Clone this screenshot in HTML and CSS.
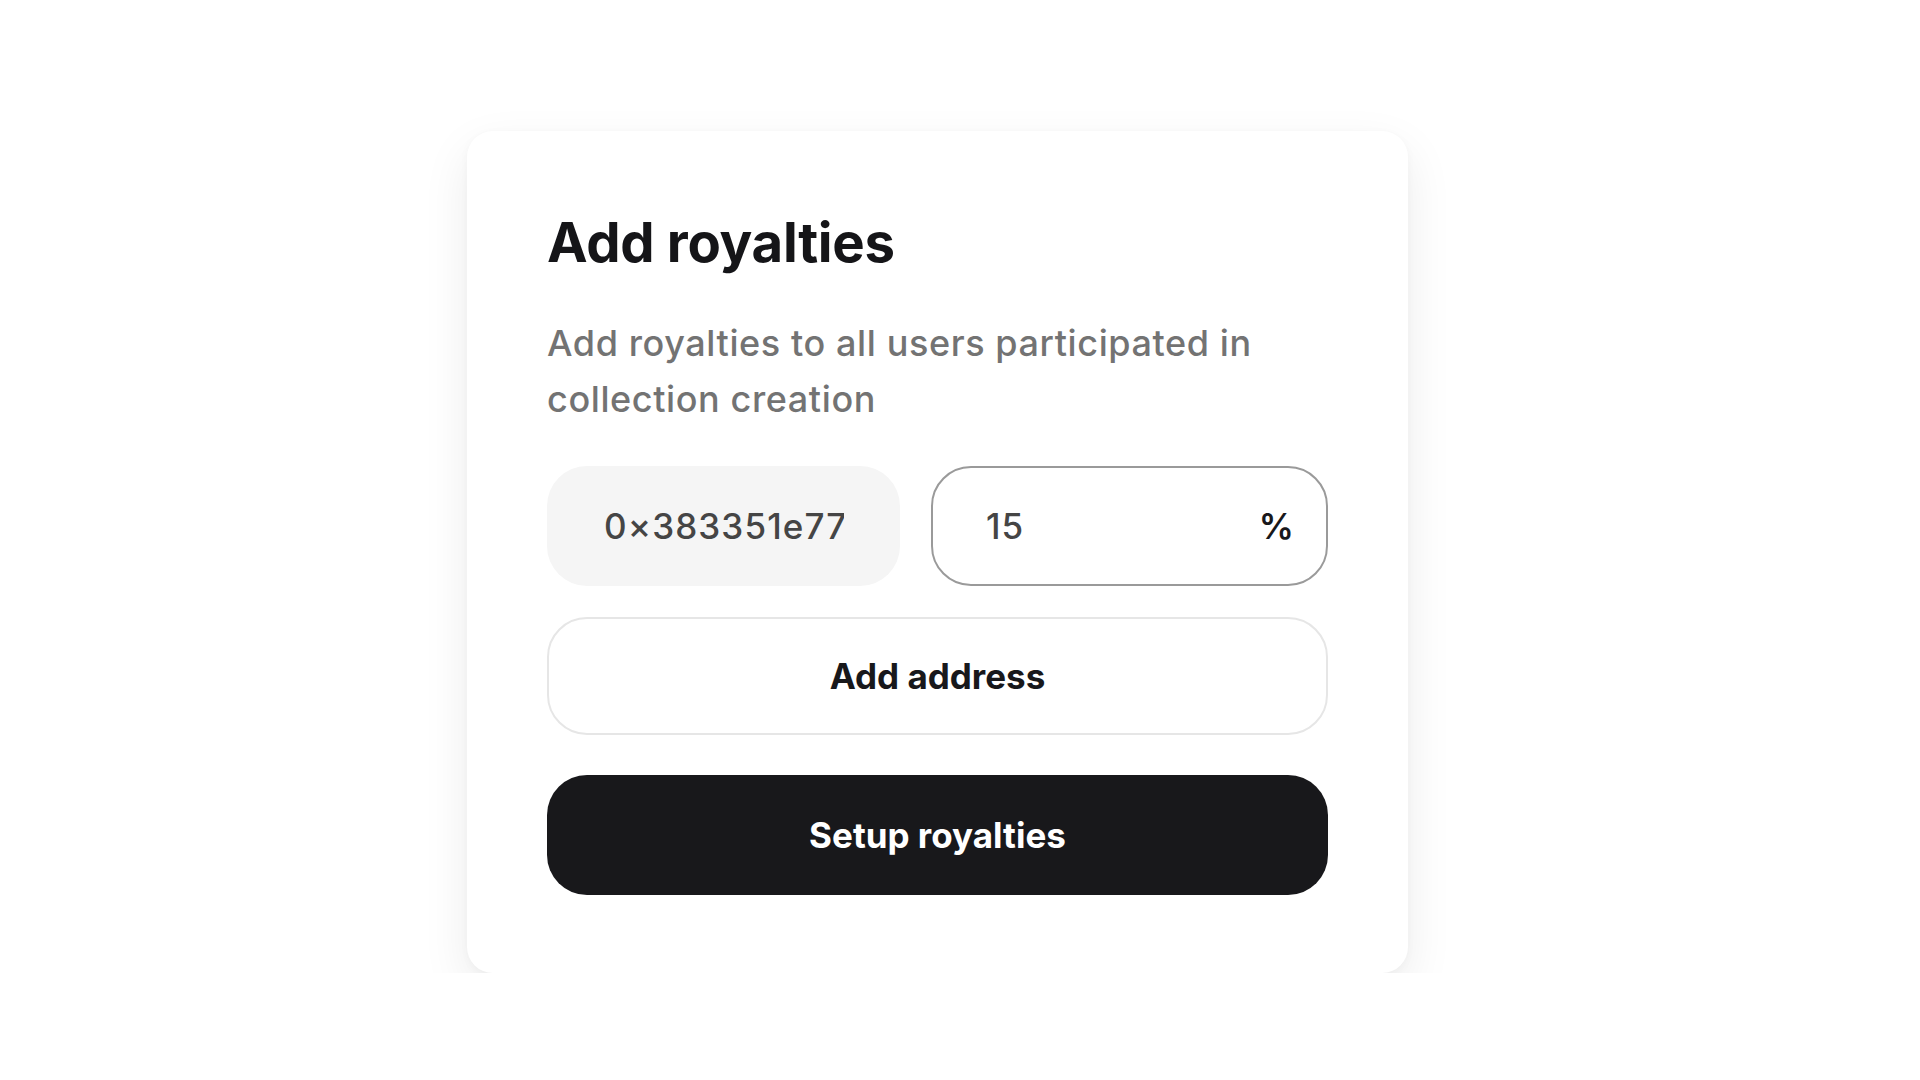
FILE: index.html
```html
<!DOCTYPE html>
<html lang="en">
<head>
<meta charset="utf-8">
<title>Add royalties</title>
<link rel="stylesheet" href="styles.css">
</head>
<body>
<main class="page">
  <section class="card">
    <h1 class="title">Add royalties</h1>
    <p class="desc">Add royalties to all users participated in collection creation</p>
    <div class="row">
      <div class="field field-address"><span class="address">0×383351e778a8f2c1d9b04</span></div>
      <div class="field field-percent"><span class="value">15</span><span class="unit">%</span></div>
    </div>
    <button class="btn btn-outline" type="button">Add address</button>
    <button class="btn btn-dark" type="button">Setup royalties</button>
  </section>
</main>
</body>
</html>
```
FILE: styles.css
```css
* { box-sizing: border-box; }
html, body { margin: 0; padding: 0; background: #ffffff; }
body {
  font-family: Inter, "Noto Sans", sans-serif;
  color: #18181b;
}
.page {
  padding: 131px 0 0 467px;
}
.card {
  width: 941px;
  height: 842px;
  background: #ffffff;
  border-radius: 26px;
  box-shadow: 0 18px 48px rgba(0, 0, 0, 0.08), 0 2px 10px rgba(0, 0, 0, 0.03);
  padding: 80px 80px 77px 80px;
  display: flex;
  flex-direction: column;
}
.title {
  margin: 0;
  font-size: 54.5px;
  line-height: 62px;
  font-weight: 700;
  color: #151518;
  letter-spacing: -0.3px;
}
.desc {
  margin: 42px 0 0 0;
  font-size: 36px;
  line-height: 56px;
  font-weight: 500;
  letter-spacing: 0.6px;
  color: #737373;
}
.row {
  margin-top: 39px;
  display: flex;
  gap: 31px;
  height: 120px;
}
.field {
  border-radius: 40px;
  display: flex;
  align-items: center;
  font-size: 35px;
  font-weight: 500;
  color: #454545;
}
.field-address {
  flex: 0 0 353px;
  background: #f5f5f5;
  padding: 0 56px 0 57px;
  overflow: hidden;
}
.address {
  display: block;
  white-space: nowrap;
  overflow: hidden;
  width: 100%;
  letter-spacing: 1.1px;
}
.field-percent {
  flex: 1 1 auto;
  border: 2px solid #9a9a9a;
  padding: 0 32px 0 53px;
  justify-content: space-between;
}
.value {
  letter-spacing: 1px;
}
.unit {
  color: #18181b;
  font-weight: 600;
}
.btn {
  width: 100%;
  height: 120px;
  border-radius: 40px;
  font-family: Inter, "Noto Sans", sans-serif;
  font-size: 35px;
  font-weight: 700;
  cursor: pointer;
}
.btn-outline {
  margin-top: 31px;
  height: 118px;
  background: #ffffff;
  border: 2px solid #e6e6e6;
  color: #18181b;
}
.btn-dark {
  margin-top: 40px;
  background: #18181b;
  border: none;
  color: #ffffff;
}
```
